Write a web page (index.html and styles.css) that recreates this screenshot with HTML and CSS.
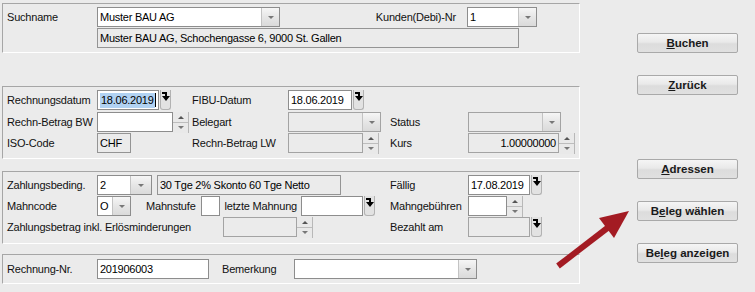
FILE: index.html
```html
<!DOCTYPE html>
<html lang="de">
<head>
  <meta charset="UTF-8">
  <title>Beleg erfassen</title>
  <link rel="stylesheet" href="styles.css">
</head>
<body>

<div class="screen">
  <div class="form">

    <section class="panel p1">
      <div class="row">
        <span class="lbl w90">Suchname</span>
        <span class="field w183"><span class="txt">Muster BAU AG</span><span class="drop"></span></span>
        <span class="lbl right w176">Kunden(Debi)-Nr</span>
        <span class="field w70 ml11"><span class="txt">1</span><span class="drop"></span></span>
      </div>
      <div class="row">
        <span class="lbl w90"></span>
        <span class="field box w422"><span class="txt">Muster BAU AG, Schochengasse 6, 9000 St. Gallen</span></span>
      </div>
    </section>

    <section class="panel p2">
      <div class="grid g2">
        <span class="lbl">Rechnungsdatum</span>
        <span class="cell">
          <span class="field w62"><span class="txt"><span class="sel">18.06.2019</span><span class="caret"></span></span></span>
          <span class="dbtn"><svg viewBox="0 0 8 10" width="8" height="10"><path d="M0 0h5v4h3L4 9 0 4h3V2H0z"/></svg></span>
        </span>
        <span class="lbl">FIBU-Datum</span>
        <span class="cell">
          <span class="field w64"><span class="txt">18.06.2019</span></span>
          <span class="dbtn"><svg viewBox="0 0 8 10" width="8" height="10"><path d="M0 0h5v4h3L4 9 0 4h3V2H0z"/></svg></span>
        </span>
        <span></span>
        <span></span>

        <span class="lbl">Rechn-Betrag BW</span>
        <span class="cell">
          <span class="field w76"></span>
          <span class="spin"><i class="up"></i><i class="dn"></i></span>
        </span>
        <span class="lbl">Belegart</span>
        <span class="cell"><span class="field dis w93"><span class="drop"></span></span></span>
        <span class="lbl">Status</span>
        <span class="cell"><span class="field dis w93"><span class="drop"></span></span></span>

        <span class="lbl">ISO-Code</span>
        <span class="cell"><span class="field box w34"><span class="txt">CHF</span></span></span>
        <span class="lbl">Rechn-Betrag LW</span>
        <span class="cell">
          <span class="field dis w75"></span>
          <span class="spin"><i class="up"></i><i class="dn"></i></span>
        </span>
        <span class="lbl">Kurs</span>
        <span class="cell">
          <span class="field dis w91"><span class="txt num">1.00000000</span></span>
          <span class="spin"><i class="up"></i><i class="dn"></i></span>
        </span>
      </div>
    </section>

    <section class="panel p3">
      <div class="grid g3">
        <span class="lbl">Zahlungsbeding.</span>
        <span class="cell span3">
          <span class="field w55"><span class="txt">2</span><span class="drop wide"></span></span>
          <span class="field box w184 ml5"><span class="txt">30 Tge 2% Skonto 60 Tge Netto</span></span>
        </span>
        <span class="lbl">Fällig</span>
        <span class="cell">
          <span class="field w62"><span class="txt">17.08.2019</span></span>
          <span class="dbtn"><svg viewBox="0 0 8 10" width="8" height="10"><path d="M0 0h5v4h3L4 9 0 4h3V2H0z"/></svg></span>
        </span>

        <span class="lbl">Mahncode</span>
        <span class="cell span3">
          <span class="field w34"><span class="txt">O</span><span class="drop"></span></span>
          <span class="lbl ml15">Mahnstufe</span>
          <span class="field w19 ml5"></span>
          <span class="lbl ml5">letzte Mahnung</span>
          <span class="field w62 ml4"></span>
          <span class="dbtn"><svg viewBox="0 0 8 10" width="8" height="10"><path d="M0 0h5v4h3L4 9 0 4h3V2H0z"/></svg></span>
        </span>
        <span class="lbl">Mahngebühren</span>
        <span class="cell">
          <span class="field w39"></span>
          <span class="spin"><i class="up"></i><i class="dn"></i></span>
        </span>

        <span class="lbl span2">Zahlungsbetrag inkl. Erlösminderungen</span>
        <span class="cell span2">
          <span class="field dis w74 ml31"></span>
          <span class="spin"><i class="up"></i><i class="dn"></i></span>
        </span>
        <span class="lbl">Bezahlt am</span>
        <span class="cell">
          <span class="field dis w62"></span>
          <span class="dbtn"><svg viewBox="0 0 8 10" width="8" height="10"><path d="M0 0h5v4h3L4 9 0 4h3V2H0z"/></svg></span>
        </span>
      </div>
    </section>

    <section class="panel p4">
      <div class="row">
        <span class="lbl w90">Rechnung-Nr.</span>
        <span class="field w112"><span class="txt">201906003</span></span>
        <span class="lbl ml13 w72">Bemerkung</span>
        <span class="field w183"><span class="drop"></span></span>
      </div>
    </section>

  </div>

  <div class="actions">
    <button class="btn"><u>B</u>uchen</button>
    <button class="btn"><u>Z</u>urück</button>
    <button class="btn far"><u>A</u>dressen</button>
    <button class="btn">B<u>e</u>leg wählen</button>
    <button class="btn">Be<u>l</u>eg anzeigen</button>
  </div>

  <svg class="pointer" width="755" height="292" viewBox="0 0 755 292">
    <line x1="558" y1="266" x2="610" y2="226" stroke="#a31b23" stroke-width="6"/>
    <polygon points="629,211 599,218 614,238" fill="#a31b23"/>
  </svg>
</div>

</body>
</html>
```

FILE: styles.css
```css
body {
  margin: 0;
  background: #ebebeb;
  font-family: "Liberation Sans", Arial, sans-serif;
  font-size: 11px;
  color: #000;
}

.screen {
  position: relative;
  display: flex;
  width: 755px;
  height: 292px;
}

.form {
  width: 578px;
  margin-left: 2px;
}

/* group boxes */
.panel {
  box-sizing: border-box;
  width: 578px;
  border-top: 1px solid #a6a6a6;
  border-left: 1px solid #a6a6a6;
  border-right: 1px solid #fff;
  border-bottom: 1px solid #fff;
  padding: 3px 0 4px 4px;
}

.p1 { margin-top: 3px; }
.p2 { margin-top: 33px; }
.p3 { margin-top: 12px; padding-bottom: 5px; }
.p4 { margin-top: 10px; padding-top: 4px; padding-bottom: 3px; }

.row {
  display: flex;
  align-items: flex-start;
  height: 21px;
}

.p1 .row + .row { height: 20px; }

.grid {
  display: grid;
  grid-template-columns: 90px 95px 96px 102px 78px 1fr;
  grid-auto-rows: 21px;
  align-items: start;
}

.g2 { grid-template-rows: 22px 21px 21px; }

.cell {
  display: flex;
  align-items: flex-start;
}

.span2 { grid-column: span 2; }
.span3 { grid-column: span 3; }

.lbl {
  display: inline-block;
  line-height: 20px;
  height: 20px;
  letter-spacing: -0.2px;
  white-space: nowrap;
  color: #111;
}

.right { text-align: right; }

/* inputs */
.field {
  box-sizing: border-box;
  display: inline-flex;
  align-items: center;
  height: 20px;
  border: 1px solid #8d8d8d;
  background: #fff;
  overflow: hidden;
}

.field.dis {
  background: #ebebeb;
  border-color: #a3a3a3;
}

.field.box {
  background: #ebebeb;
  border-color: #949494;
}

.txt {
  flex: 1;
  padding-left: 2px;
  font-size: 11px;
  letter-spacing: -0.25px;
  white-space: nowrap;
  display: flex;
  align-items: center;
}

.txt.num {
  justify-content: flex-end;
  padding-right: 2px;
}

.sel {
  background: #b1d2f2;
  line-height: 15px;
  padding: 0 1px;
}

.caret {
  display: inline-block;
  width: 1px;
  height: 14px;
  background: #000;
}

.drop {
  position: relative;
  width: 17px;
  height: 100%;
  margin-left: auto;
  border-left: 1px solid #c3c3c3;
  background: linear-gradient(#f6f6f6, #e6e6e6 50%, #dadada);
  flex-shrink: 0;
}

.drop.wide { width: 20px; }

.drop::after {
  content: "";
  position: absolute;
  left: 50%;
  top: 8px;
  margin-left: -3px;
  border-left: 3px solid transparent;
  border-right: 3px solid transparent;
  border-top: 3px solid #777;
}

.dbtn {
  box-sizing: border-box;
  width: 11px;
  height: 20px;
  margin-left: 1px;
  padding-top: 2px;
  text-align: center;
  background: #e2e2e2;
  border: 1px solid #b2b2b2;
  border-top: 0;
  border-radius: 0 0 3px 3px;
}

.dbtn svg {
  display: block;
  margin-left: 1px;
}

.spin {
  box-sizing: border-box;
  display: flex;
  flex-direction: column;
  width: 16px;
  height: 21px;
  border-right: 1px solid #b8b8b8;
}

.spin i {
  position: relative;
  flex: 1;
  background: #e9e9e9;
}

.spin i.up { border-bottom: 1px solid #bdbdbd; }

.spin i::after {
  content: "";
  position: absolute;
  left: 5px;
  top: 4px;
  border-left: 3px solid transparent;
  border-right: 3px solid transparent;
}

.spin i.up::after { border-bottom: 3px solid #555; }
.spin i.dn::after { border-top: 3px solid #777; top: 3px; }

/* widths */
.w19 { width: 19px; }
.w34 { width: 34px; }
.w39 { width: 39px; }
.w55 { width: 55px; }
.w62 { width: 62px; }
.w64 { width: 64px; }
.w70 { width: 70px; }
.w72 { width: 72px; }
.w74 { width: 74px; }
.w75 { width: 75px; }
.w76 { width: 76px; }
.w90 { width: 90px; }
.w91 { width: 91px; }
.w93 { width: 93px; }
.w112 { width: 112px; }
.w176 { width: 176px; }
.w183 { width: 183px; }
.w184 { width: 184px; }
.w422 { width: 422px; }

.ml4 { margin-left: 4px; }
.ml5 { margin-left: 5px; }
.ml11 { margin-left: 11px; }
.ml13 { margin-left: 13px; }
.ml15 { margin-left: 15px; }
.ml31 { margin-left: 31px; }

/* buttons on the right */
.actions {
  display: flex;
  flex-direction: column;
  gap: 22px;
  margin-left: 57px;
  padding-top: 33px;
}

.btn {
  box-sizing: border-box;
  width: 101px;
  height: 20px;
  padding: 0;
  border: 1px solid #a9a9a9;
  border-radius: 2px;
  background: linear-gradient(#f5f5f5, #e9e9e9 45%, #dcdcdc 55%, #e0e0e0);
  font-family: "Liberation Sans", Arial, sans-serif;
  font-size: 11.5px;
  font-weight: bold;
  color: #1a1a1a;
}

.btn.far { margin-top: 42px; }

.pointer {
  position: absolute;
  left: 0;
  top: 0;
  pointer-events: none;
}
```
